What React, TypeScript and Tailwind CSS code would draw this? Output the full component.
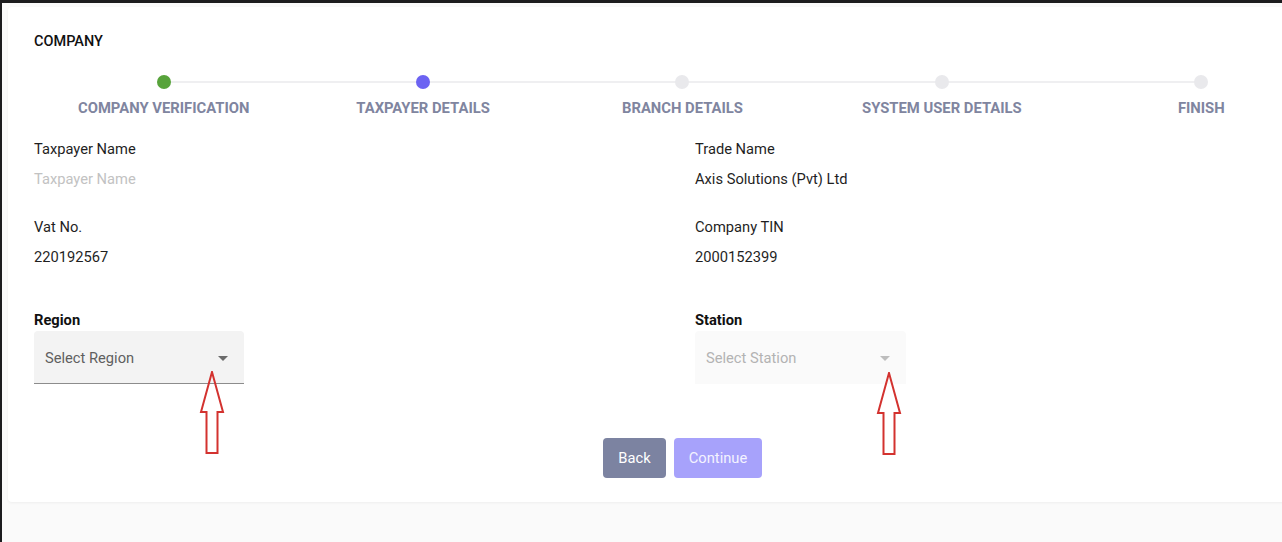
import React from "react";

const steps = [
  { label: "COMPANY VERIFICATION", color: "bg-[#57a33b]" },
  { label: "TAXPAYER DETAILS", color: "bg-[#6c63f2]" },
  { label: "BRANCH DETAILS", color: "bg-[#e9e9ec]" },
  { label: "SYSTEM USER DETAILS", color: "bg-[#e9e9ec]" },
  { label: "FINISH", color: "bg-[#e9e9ec]" },
];

function Caret({ color }: { color: string }) {
  return (
    <svg width="24" height="24" viewBox="0 0 24 24" className={color}>
      <path d="M7 10l5 5 5-5z" fill="currentColor" />
    </svg>
  );
}

function RedArrow({ className }: { className: string }) {
  return (
    <svg
      width="26"
      height="84"
      viewBox="0 0 26 84"
      className={"absolute " + className}
    >
      <polygon
        points="13,1 24,41 18.5,41 18.5,82 7.5,82 7.5,41 2,41"
        fill="none"
        stroke="#d3322f"
        strokeWidth="2"
        strokeLinejoin="miter"
      />
    </svg>
  );
}

export default function App() {
  return (
    <div
      className="w-[1282px] h-[542px] overflow-hidden bg-[#1c1c1e] pt-[3px] pl-[2px]"
      style={{ fontFamily: "Roboto, 'Liberation Sans', sans-serif" }}
    >
      <div className="w-[1400px] h-[539px] bg-[#fafafa] pt-[4px] pl-[6px]">
        <div className="w-[1360px] h-[495px] bg-white shadow-[0_1px_3px_rgba(0,0,0,0.05)] rounded-[4px] pl-[26px] pt-[25px]">
          <div className="text-[14.5px] leading-[20px] font-medium text-[#111]">
            COMPANY
          </div>

          {/* Stepper */}
          <div className="w-[1297px] grid grid-cols-5 mt-[23px]">
            {steps.map((s, i) => (
              <div key={s.label} className="relative flex flex-col items-center">
                {i > 0 && (
                  <div className="absolute z-0 top-[6px] left-[-50%] right-[50%] h-[2px] bg-[#efeff1]" />
                )}
                <div
                  className={"relative z-10 w-[14px] h-[14px] rounded-full " + s.color}
                />
                <div className="mt-[9px] text-[14.8px] leading-[20px] font-bold text-[#80859f]">
                  {s.label}
                </div>
              </div>
            ))}
          </div>

          {/* Fields */}
          <div className="grid grid-cols-[661px_1fr] mt-[21px] text-[14.7px] leading-[20px] text-[#1f1f1f]">
            <div>
              <div>Taxpayer Name</div>
              <div className="mt-[10px] text-[#c2c2c2]">Taxpayer Name</div>
              <div className="mt-[28px]">Vat No.</div>
              <div className="mt-[10px]">220192567</div>
              <div className="mt-[43px] font-bold text-[#111]">Region</div>
              <div className="relative mt-[1px] w-[210px]">
                <div className="h-[53px] bg-[#f3f3f3] rounded-t-[4px] border-b border-[#8c8c8c] pl-[11px] pr-[9px] pt-[2px] flex items-center justify-between">
                  <span className="text-[#5f5f5f]">Select Region</span>
                  <Caret color="text-[#6b6b6b]" />
                </div>
                <RedArrow className="left-[165px] top-[40px]" />
              </div>
            </div>
            <div>
              <div>Trade Name</div>
              <div className="mt-[10px]">Axis Solutions (Pvt) Ltd</div>
              <div className="mt-[28px]">Company TIN</div>
              <div className="mt-[10px]">2000152399</div>
              <div className="mt-[43px] font-bold text-[#111]">Station</div>
              <div className="relative mt-[1px] w-[211px]">
                <div className="h-[53px] bg-[#fafafa] rounded-t-[4px] pl-[11px] pr-[9px] flex items-center justify-between">
                  <span className="text-[#b3b3b3]">Select Station</span>
                  <Caret color="text-[#bdbdbd]" />
                </div>
                <RedArrow className="left-[181px] top-[41px]" />
              </div>
            </div>
          </div>

          {/* Buttons */}
          <div className="w-[1297px] flex justify-center gap-[8px] mt-[54px]">
            <button className="w-[63px] h-[40px] rounded-[4px] bg-[#7c83a1] text-white text-[14.7px]">
              Back
            </button>
            <button className="w-[88px] h-[40px] rounded-[4px] bg-[#a7a2fb] text-[#f4f3ff] text-[14.7px]">
              Continue
            </button>
          </div>
        </div>
      </div>
    </div>
  );
}
